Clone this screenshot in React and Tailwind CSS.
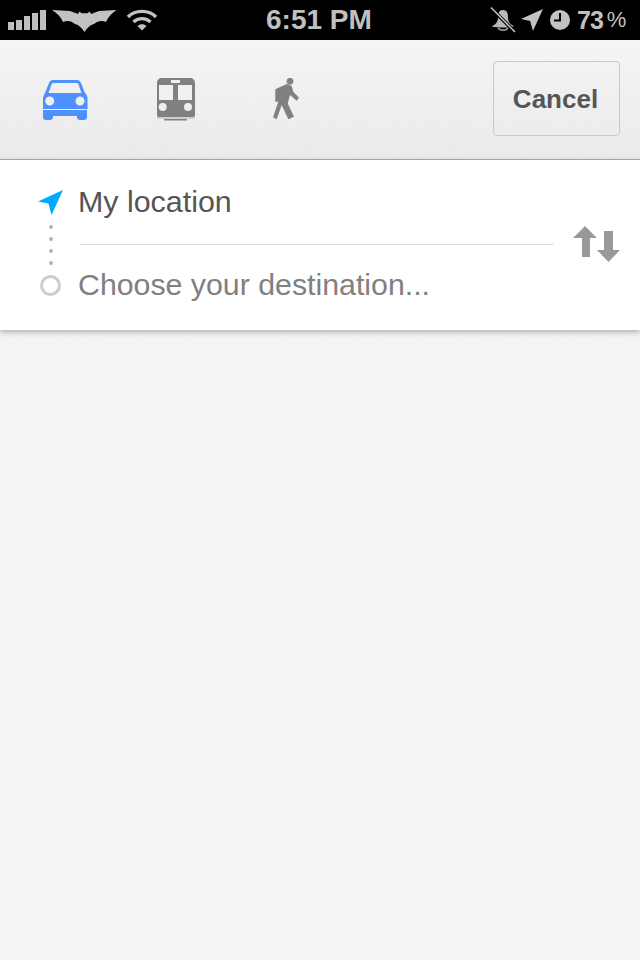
import React from "react";

const Noise = () => (
  <svg className="absolute inset-0 w-full h-full pointer-events-none" aria-hidden="true">
    <filter id="paper" x="0" y="0" width="100%" height="100%">
      <feTurbulence type="fractalNoise" baseFrequency="0.9" numOctaves="2" seed="4" />
      <feColorMatrix type="matrix" values="0 0 0 0 0.5  0 0 0 0 0.5  0 0 0 0 0.5  0.9 0 0 0 -0.4" />
    </filter>
    <rect width="100%" height="100%" filter="url(#paper)" opacity="0.12" />
  </svg>
);

const Signal = () => (
  <svg width="38" height="20" viewBox="0 0 38 20" fill="#bfbfbf" className="shrink-0">
    <rect x="0" y="12" width="6" height="8" />
    <rect x="8" y="10" width="6" height="10" />
    <rect x="16" y="6" width="6" height="14" />
    <rect x="24" y="3" width="6" height="17" />
    <rect x="32" y="0" width="6" height="20" />
  </svg>
);

const Bat = () => (
  <svg width="65" height="23" viewBox="52 10 65 23" fill="#c2c2c2" className="shrink-0">
    <path d="M52 11 L70 12 L78 15 L79.500 12.500 L81.500 14.300 L87.500 14.300 L89.500 12.500 L91 15 L99 12 L116.500 11 C112 14 108 18 106 23 C103 21.500 100 21.500 97 23 L94 25 C90 26 87 29 84.500 33 C82 29 79 26 75 25 L72 23 C69 21.500 66 21.500 63 23 C61 18 57 14 52 11 Z" />
  </svg>
);

const Wifi = () => (
  <svg width="32" height="24" viewBox="0 0 32 24" fill="none" stroke="#c2c2c2" strokeWidth="3.400" className="shrink-0">
    <path d="M2 9 C9 1.500 23 1.500 30 9" />
    <path d="M7.500 14 C12 9.500 20 9.500 24.500 14" />
    <path d="M16 22.500 L11.500 18 C14 15.800 18 15.800 20.500 18 Z" fill="#c2c2c2" stroke="none" />
  </svg>
);

const MutedBell = () => (
  <svg width="26" height="26" viewBox="0 0 26 26" className="shrink-0">
    <path d="M13 3 C9 3 8 6 8 10 C8 14 7 17 2 19 C2 21 24 21 24 19 C19 17 18 14 18 10 C18 6 17 3 13 3Z" fill="#b8b8b8" />
    <path d="M8 21 C10 24 16 24 18 21" fill="none" stroke="#a0a0a0" strokeWidth="1.500" />
    <path d="M1 1 L25 25" stroke="#000" strokeWidth="3.500" />
    <path d="M1 0.500 L25 25" stroke="#c2c2c2" strokeWidth="1.500" />
  </svg>
);

const Arrow = ({ size, color, className }) => (
  <svg width={size} height={size} viewBox="0 0 24 24" fill={color} className={className}>
    <path d="M24 0 L0 11 L10 13 L13 24 Z" />
  </svg>
);

const Clock = () => (
  <svg width="20" height="20" viewBox="0 0 20 20" className="shrink-0">
    <circle cx="10" cy="10" r="10" fill="#c2c2c2" />
    <path d="M10 3 V10.500 H4" fill="none" stroke="#000" strokeWidth="2" />
  </svg>
);

const Car = () => (
  <svg width="46" height="40" viewBox="0 0 46 40" fill="#4d90fe" className="shrink-0">
    <path fillRule="evenodd" d="M11 0 H35 C37 0 38 1 39 3 L43 13 C45 15 45.500 17 45.500 19 V29 H1 V19 C1 17 1.500 15 3 13 L7 3 C8 1 9 0 11 0 Z M11.500 3 C10.500 3 10 3.500 9.500 4.500 L6.500 13 H39.500 L36.500 4.500 C36 3.500 35.500 3 34.500 3 Z M7.700 16.500 A4.500 4.500 0 1 0 7.700 25.500 A4.500 4.500 0 1 0 7.700 16.500 Z M38 16.500 A4.500 4.500 0 1 0 38 25.500 A4.500 4.500 0 1 0 38 16.500 Z" />
    <path d="M1 30 H45 V37 C45 39 44 40 42 40 H38 C36 40 35 39 35 37 V36 H11 V37 C11 39 10 40 8 40 H4 C2 40 1 39 1 37 Z" />
  </svg>
);

const Train = () => (
  <svg width="38" height="43" viewBox="0 0 38 43" className="shrink-0">
    <path fillRule="evenodd" fill="#808080" d="M5 0 H33 C36 0 38 2 38 5 V37 C38 38.500 37 39 36 39 H2 C1 39 0 38.500 0 37 V5 C0 2 2 0 5 0 Z M2 7 V22 H16 V7 Z M21 7 V22 H35 V7 Z M5.700 25 A4 4 0 1 0 5.700 33 A4 4 0 1 0 5.700 25 Z M31 25 A4 4 0 1 0 31 33 A4 4 0 1 0 31 25 Z" />
    <rect x="14" y="2" width="9" height="3" fill="#f2f2f2" />
    <rect x="0" y="39.500" width="38" height="1" fill="#b0b0b0" />
    <rect x="7" y="41" width="23" height="1.500" fill="#808080" />
  </svg>
);

const Walker = () => (
  <svg width="28" height="42" viewBox="0 0 28 42" fill="#808080" className="shrink-0">
    <circle cx="17" cy="3.300" r="3.400" />
    <path d="M2.300 11.300 L13.700 6 L18.700 8 L20.300 13.700 L26 19.700 L23.700 22.700 L17 17 L14.700 25.300 L21 38.700 L15.300 41.300 L8.700 27 L3.700 41.300 L0 39.300 L5.300 23.700 L2.300 23.700 Z" />
  </svg>
);

const Swap = () => (
  <svg width="47" height="36" viewBox="0 0 47 36" fill="#999999" className="shrink-0">
    <path d="M12 0 L24 12 H17 V31 H9 V12 H0 Z" />
    <path d="M35.500 36 L47 24 H40 V5 H31 V24 H24 Z" />
  </svg>
);

export default function App() {
  return (
    <div className="w-[640px] h-[960px] flex flex-col bg-[#f5f5f5] overflow-hidden font-['Liberation_Sans',Arial,sans-serif]">
      <div className="h-10 bg-black flex items-center shrink-0 pl-2 text-[#c0c0c0]">
        <div className="w-[258px] flex items-center">
          <Signal />
          <div className="ml-1.5 mt-[1px]"><Bat /></div>
          <div className="ml-[9px] -mt-[1px]"><Wifi /></div>
        </div>
        <div className="font-bold text-[28px] leading-none w-[224px]">6:51 PM</div>
        <div className="flex items-center flex-1">
          <MutedBell />
          <Arrow size={22} color="#c2c2c2" className="ml-[5px] shrink-0" />
          <div className="ml-[7px]"><Clock /></div>
          <span className="ml-[7px] text-[25px] leading-none font-bold tracking-[-1px]">73</span>
          <span className="ml-[4px] text-[22px] leading-none">%</span>
        </div>
      </div>

      <div className="relative h-[120px] shrink-0 flex items-center border-b border-[#b0b0b0] bg-gradient-to-b from-[#f5f5f5] to-[#ebebeb] pl-[42px] pr-5">
        <Noise />
        <Car />
        <div className="ml-[69px]"><Train /></div>
        <div className="ml-[78px] -mt-0.5"><Walker /></div>
        <button className="ml-auto w-[127px] h-[75px] mb-[2px] pt-[2px] pr-[2px] rounded-[4px] border border-[#c9c9c9] text-[26px] font-bold text-[#555555]">
          Cancel
        </button>
      </div>

      <div className="h-[170px] shrink-0 bg-white flex shadow-[0_2px_6px_rgba(0,0,0,0.3)] relative z-10">
        <div className="w-[78px] flex flex-col items-center pl-[23px] pt-[30px]">
          <Arrow size={25} color="#00a8ff" />
          <div className="flex flex-col gap-2 mt-[10px]">
            <span className="w-1 h-1 rounded-full bg-[#b5b5b5]" />
            <span className="w-1 h-1 rounded-full bg-[#b5b5b5]" />
            <span className="w-1 h-1 rounded-full bg-[#b5b5b5]" />
            <span className="w-1 h-1 rounded-full bg-[#b5b5b5]" />
          </div>
          <span className="w-[21px] h-[21px] mt-[10px] rounded-full border-[3px] border-[#cccccc]" />
        </div>
        <div className="w-[476px] flex flex-col">
          <div className="h-[85px] pb-[2px] flex items-center border-b border-[#dcdcdc] ml-0.5 text-[30.400px] leading-none text-[#555555] -indent-0.5">
            My location
          </div>
          <div className="h-[84px] pb-1 flex items-center text-[30.300px] leading-none text-[#808080]">
            Choose your destination...
          </div>
        </div>
        <div className="flex-1 flex items-center pl-[19px] pb-[2px]">
          <Swap />
        </div>
      </div>

      <div className="relative flex-1">
        <Noise />
      </div>
    </div>
  );
}
